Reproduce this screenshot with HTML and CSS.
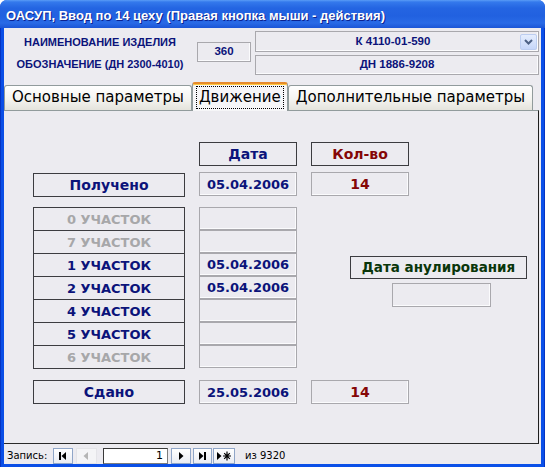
FILE: index.html
```html
<!DOCTYPE html>
<html lang="ru">
<head>
<meta charset="utf-8">
<title>ОАСУП</title>
<link rel="stylesheet" href="styles.css">
</head>
<body>
<div class="window">
  <div class="titlebar"><span class="title">ОАСУП, Ввод по 14 цеху (Правая кнопка мыши - действия)</span></div>
  <div class="client">
    <div class="header">
      <div class="labels">
        <div class="lbl">НАИМЕНОВАНИЕ ИЗДЕЛИЯ</div>
        <div class="lbl">ОБОЗНАЧЕНИЕ (ДН 2300-4010)</div>
      </div>
      <div class="fld code">360</div>
      <div class="fields">
        <div class="fld combo">
          <span class="combo-text">К 4110-01-590</span>
          <span class="dd"><svg width="17" height="16" viewBox="0 0 17 16"><path d="M5 6 L8.5 9.5 L12 6" fill="none" stroke="#4d6185" stroke-width="2"/></svg></span>
        </div>
        <div class="fld name">ДН 1886-9208</div>
      </div>
    </div>
    <div class="tabs">
      <div class="tab">Основные параметры</div>
      <div class="tab active"><span class="focus">Движение</span></div>
      <div class="tab">Дополнительные параметры</div>
    </div>
    <div class="panel">
      <div class="row row-head">
        <div class="cap navy col2">Дата</div>
        <div class="cap red col3">Кол-во</div>
      </div>
      <div class="row row-got">
        <div class="cap navy big got">Получено</div>
        <div class="val navy">05.04.2006</div>
        <div class="val red qty">14</div>
      </div>
      <div class="row row-list">
        <div class="list">
          <div class="item dim">0 УЧАСТОК</div>
          <div class="item dim">7 УЧАСТОК</div>
          <div class="item navy">1 УЧАСТОК</div>
          <div class="item navy">2 УЧАСТОК</div>
          <div class="item navy">4 УЧАСТОК</div>
          <div class="item navy">5 УЧАСТОК</div>
          <div class="item dim">6 УЧАСТОК</div>
        </div>
        <div class="dates">
          <div class="val cell"></div>
          <div class="val cell"></div>
          <div class="val cell navy">05.04.2006</div>
          <div class="val cell navy">05.04.2006</div>
          <div class="val cell"></div>
          <div class="val cell"></div>
          <div class="val cell"></div>
        </div>
        <div class="annul">
          <div class="cap green annul-cap">Дата анулирования</div>
          <div class="val annul-val"></div>
        </div>
      </div>
      <div class="row row-done">
        <div class="cap navy big">Сдано</div>
        <div class="val navy">25.05.2006</div>
        <div class="val red qty">14</div>
      </div>
    </div>
    <div class="navbar">
      <span class="nav-label">Запись:</span>
      <span class="nbtn first"><svg width="18" height="14" viewBox="0 0 18 14"><rect x="5" y="3" width="2" height="8" fill="#000"/><path d="M12 3 L12 11 L7.5 7 Z" fill="#000"/></svg></span>
      <span class="nbtn prev off"><svg width="19" height="14" viewBox="0 0 19 14"><path d="M11 3 L11 11 L6.5 7 Z" fill="#b5b5b5"/></svg></span>
      <span class="recno">1</span>
      <span class="nbtn next"><svg width="18" height="14" viewBox="0 0 18 14"><path d="M7 3 L7 11 L11.5 7 Z" fill="#000"/></svg></span>
      <span class="nbtn last"><svg width="17" height="14" viewBox="0 0 17 14"><path d="M5 3 L5 11 L9.5 7 Z" fill="#000"/><rect x="10" y="3" width="2" height="8" fill="#000"/></svg></span>
      <span class="nbtn new"><svg width="20" height="14" viewBox="0 0 20 14"><path d="M3 3 L3 11 L7.5 7 Z" fill="#000"/><path d="M13 2.5 V11.5 M9 7 H17 M10.2 4.2 L15.8 9.8 M15.8 4.2 L10.2 9.8" stroke="#000" stroke-width="1.2"/></svg></span>
      <span class="nav-of">из 9320</span>
    </div>
  </div>
</div>
</body>
</html>
```
FILE: styles.css
```css
* { box-sizing: border-box; margin: 0; padding: 0; }
html, body { width: 545px; height: 467px; overflow: hidden; }
body { margin: 0; background: #ffffff; font-family: "DejaVu Sans", sans-serif; }

.window {
  width: 545px; height: 467px;
  display: flex; flex-direction: column;
  background: linear-gradient(to right, #0019a0 0, #0a4ee6 1px, #0a50e8 544px, #0019a0 545px);
  border-radius: 7px 7px 0 0;
}
.titlebar {
  height: 28px; flex: none;
  border-radius: 7px 7px 0 0;
  background: linear-gradient(#5a9cf6 0, #3479ec 2px, #2465e2 8px, #2161e0 16px, #296ae6 23px, #1b55d6 28px);
  padding: 3px 0 0 6px;
}
.title {
  display: block;
  font: bold 13px/25px "Liberation Sans", Arial, sans-serif;
  color: #ffffff;
  text-shadow: 1px 1px 0 #0b2290;
  white-space: nowrap;
}
.client {
  flex: 1;
  margin: 0 4px 3px;
  background: #ecebf0;
  display: flex; flex-direction: column;
}

/* header */
.header { height: 54px; flex: none; display: flex; }
.labels { width: 192px; padding-top: 4px; display: flex; flex-direction: column; gap: 2px; }
.lbl {
  height: 20px; text-align: center;
  font: bold 11px/20px "Liberation Sans", Arial, sans-serif;
  color: #0b137a; white-space: nowrap;
}
.fld {
  border: 1px solid #a9a8ad;
  box-shadow: inset -1px -1px 0 #fbfbfd;
  display: flex; align-items: center; justify-content: center;
  font: bold 11.5px/1 "Liberation Sans", Arial, sans-serif;
  color: #0b137a;
}
.code { width: 54px; height: 20px; margin: 14px 0 0 1px; }
.fields { flex: 1; margin: 3px 2px 0 4px; display: flex; flex-direction: column; gap: 3px; }
.combo { height: 21px; }
.name { height: 20px; }
.combo-text { flex: 1; text-align: center; padding-left: 10px; }
.dd {
  width: 17px; height: 16px; margin-right: 1px; flex: none;
  display: flex;
  border: 1px solid #bccdf0;
  border-radius: 2px;
  background: linear-gradient(#e5edfd, #c6d6f9);
}
.dd svg { display: block; margin: -1px; }

/* tabs */
.tabs { height: 28px; flex: none; display: flex; align-items: flex-end; position: relative; z-index: 1; }
.tab {
  height: 25px; padding: 0 7px;
  font: 15px/23px "DejaVu Sans", sans-serif;
  color: #000000; white-space: nowrap;
  background: linear-gradient(#ffffff, #f4f4f0 55%, #e4e3dc);
  border: 1px solid #919b9c; border-bottom: none;
  border-radius: 3px 3px 0 0;
}
.tab.active {
  height: 29px; margin-bottom: -1px; padding: 1px 3px 0;
  background: #f6f6f8;
  border-top: 2px solid #e68b2c;
  box-shadow: inset 0 1px 0 #ffc73c;
}
.focus { display: block; border: 1px dotted #000000; padding: 0 2px; line-height: 21px; margin-top: 1px; }

/* panel */
.panel {
  height: 334px; flex: none;
  margin-right: 2px;
  border-top: 1px solid #919b9c;
  border-right: 1px solid #1e1e1e;
  border-bottom: 1px solid #2a2a2a;
  padding-left: 29px;
}
.row { display: grid; grid-template-columns: 152px 98px 98px 1fr; column-gap: 14px; }
.row-head { margin-top: 31px; height: 24px; }
.row-got { margin-top: 6px; height: 25px; }
.row-list { margin-top: 10px; height: 161px; }
.row-done { margin-top: 12px; height: 24px; }

.cap {
  border: 1px solid #3c3c40;
  display: flex; align-items: center; justify-content: center;
  font: bold 14px/1 "DejaVu Sans", sans-serif;
  height: 24px;
}
.col2 { grid-column: 2; }
.col3 { grid-column: 3; }
.got { margin-top: 1px; }
.val {
  height: 24px;
  border: 1px solid #a9a8ad;
  box-shadow: inset -1px -1px 0 #fbfbfd;
  display: flex; align-items: center; justify-content: center;
  font: bold 13px/1 "DejaVu Sans", sans-serif;
}
.qty { font-size: 14px; }
.navy { color: #0b137a; }
.red { color: #850606; }
.green { color: #0a360a; }
.dim { color: #a7a7a9; }

.list { border: 1px solid #3c3c40; border-top: none; display: flex; flex-direction: column; }
.item {
  height: 23px; border-top: 1px solid #3c3c40;
  display: flex; align-items: center; justify-content: center;
  font: bold 13px/1 "DejaVu Sans", sans-serif;
}
.dates { display: flex; flex-direction: column; }
.cell { height: 23px; }
.annul { grid-column: 3 / span 2; padding: 49px 0 0 39px; display: flex; flex-direction: column; }
.annul-cap { width: 177px; height: 23px; font-size: 13.5px; }
.annul-val { width: 99px; height: 24px; margin: 4px 0 0 42px; }

/* navigation bar */
.navbar {
  height: 20px; flex: none;
  display: flex; align-items: center;
  padding: 3px 0 0 3px;
  font: 10px/1 "DejaVu Sans", sans-serif;
  color: #000000;
}
.nav-label { width: 46px; }
.nbtn {
  height: 16px; display: flex; align-items: center; justify-content: center;
  border: 1px solid #90a6c8;
  background: linear-gradient(#ffffff, #e9ecf3);
}
.nbtn svg { display: block; }
.first { width: 20px; }
.prev { width: 21px; margin-left: 3px; }
.off { border-color: #e4e4e8; background: #f4f4f6; }
.recno {
  width: 65px; height: 16px; margin: 0 3px 0 6px;
  background: #ffffff;
  border: 1px solid #7d7d7d; border-top-color: #3a3a3a; border-left-color: #3a3a3a;
  font: 11px/14px "DejaVu Sans", sans-serif;
  text-align: right; padding-right: 4px;
}
.next { width: 20px; }
.last { width: 19px; margin-left: 2px; }
.new { width: 22px; margin-left: 1px; }
.nav-of { margin-left: 10px; }
```
